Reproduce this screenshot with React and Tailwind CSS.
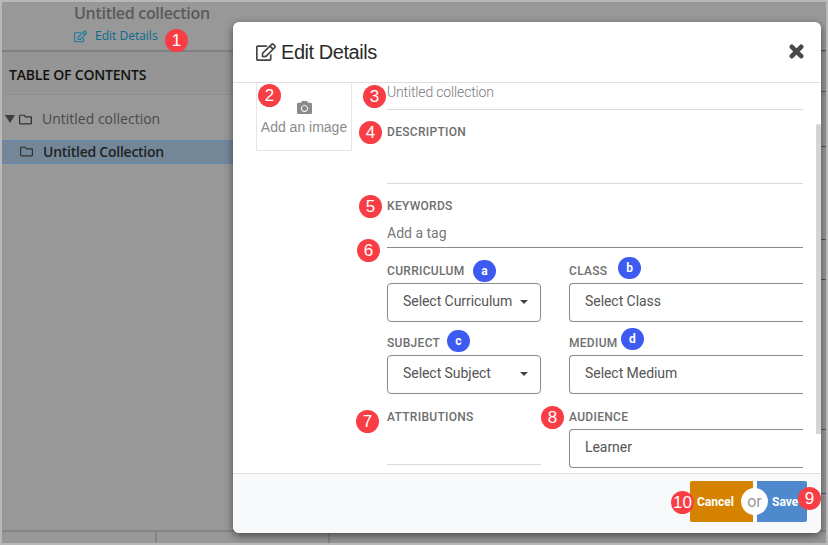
import React from "react";
import { FaRegEdit, FaCamera, FaRegFolder } from "react-icons/fa";

const Badge = ({ x, y, c = "red", children }) => (
  <span
    className={`absolute flex items-center justify-center rounded-full text-white ${c === "red" ? "w-[23px] h-[23px] bg-[#f83d44] text-[17px] [font-family:'Liberation_Sans',sans-serif]" : "w-[23px] h-[22px] bg-[#3d5af1] text-[12px] font-bold [font-family:Roboto,sans-serif]"}`}
    style={{ left: x, top: y }}
  >
    {children}
  </span>
);

const Label = ({ children }) => (
  <div className="text-[12px] leading-[14px] font-medium tracking-[0.3px] text-[#6e6e6e] [font-family:Roboto,sans-serif]">{children}</div>
);

const Select = ({ children, caret, wide }) => (
  <div
    className={`h-[39px] pb-[2px] flex items-center text-[14px] text-[#555] [font-family:Roboto,sans-serif] ${wide ? "w-[234px] border-y border-l border-[#8a8a8a] rounded-l-[4px] pl-[15px]" : "w-[154px] border border-[#8a8a8a] rounded-[4px] pl-[15px] pr-[12px] justify-between"}`}
  >
    <span className="tracking-[-0.05px]">{children}</span>
    {caret && <span className="shrink-0 w-0 h-0 border-x-[4px] border-x-transparent border-t-[4px] border-t-[#444]" />}
  </div>
);

const Field = ({ label, children, className = "" }) => (
  <div className={className}>
    <Label>{label}</Label>
    <div className="mt-[5px]">{children}</div>
  </div>
);

const ticks = [48, 89, 144, 237, 277, 427, 491];

export default function App() {
  return (
    <div className="relative w-[828px] h-[545px] overflow-hidden bg-[#989898] border-2 border-[#b8b8b8] [font-family:'Open_Sans',sans-serif]">
      <div className="flex flex-col h-full">
        <div className="h-[50px] border-b-2 border-[#808080] pl-[72px]">
          <div className="text-[16px] leading-[22px] font-semibold tracking-[-0.3px] text-[#5a5a5a]">Untitled collection</div>
          <div className="flex items-center gap-[8px] mt-[3px] text-[12px] leading-[18px] text-[#0b6b8f]">
            <FaRegEdit className="text-[13px] text-[#1f7d9c]" />
            <span>Edit Details</span>
          </div>
        </div>
        <div className="h-[43px] flex items-center pl-[7px] pt-[2px] bg-[#959595] border-b border-[#8e8e8e] text-[14px] font-semibold text-[#111] tracking-[-0.2px]">
          TABLE OF CONTENTS
        </div>
        <div className="h-[45px] flex items-end pb-[11px] pl-[3px] text-[14px] leading-[20px] text-[#4a4a4a]">
          <span className="mb-[6px] w-0 h-0 border-x-[5px] border-x-transparent border-t-[8px] border-t-[#3d3d3d]" />
          <FaRegFolder className="ml-[4px] mr-[10px] mb-[3px] text-[13px] text-[#333]" />
          Untitled collection
        </div>
        <div className="h-[24px] w-[328px] pb-[2px] flex items-center pl-[18px] bg-[#738799] border-y border-[#6488ad] text-[14px] font-semibold tracking-[-0.25px] text-[#222]">
          <FaRegFolder className="mr-[10px] text-[13px] text-[#333]" />
          Untitled Collection
        </div>
        <div className="flex-1" />
        <div className="h-[13px] border-t-2 border-[#858585] flex">
          <div className="w-[155px] border-r-2 border-[#858585]" />
          <div className="w-[173px] border-r-2 border-[#858585]" />
        </div>
      </div>

      {ticks.map((t) => (
        <span key={t} className="absolute left-[819px] w-[5px] h-[1px] bg-[#555]" style={{ top: t }} />
      ))}

      <div className="absolute left-[231px] top-[20px] w-[588px] h-[511px] bg-white rounded-[6px] shadow-[0_3px_9px_rgba(0,0,0,0.5)] flex flex-col overflow-hidden">
        <div className="h-[61px] shrink-0 border-b border-[#e0e0e0] flex items-center justify-between pl-[23px] pr-[17px] text-[#2b2b2b]">
          <div className="flex items-center gap-[5px] text-[20px] [font-family:'Liberation_Sans',sans-serif] tracking-[-0.45px]">
            <FaRegEdit className="text-[20px] text-[#444]" />
            <span>Edit Details</span>
          </div>
          <svg width="15" height="15" viewBox="0 0 15 15" className="mt-[-1px]">
            <path d="M2.8 2.8L12.2 12.2M12.2 2.8L2.8 12.2" stroke="#4a4a4a" strokeWidth="4.6" strokeLinecap="round" fill="none" />
          </svg>
        </div>

        <div className="relative flex-1 min-h-0 flex overflow-hidden pl-[23px]">
          <div className="w-[96px] h-[68px] shrink-0 border border-t-0 border-[#e6e6e6] flex flex-col items-center pt-[17px] text-[#8b8b8b]">
            <FaCamera className="text-[15px]" />
            <div className="mt-[2px] text-[14px] leading-[20px] [font-family:'Liberation_Sans',sans-serif]">Add an image</div>
          </div>

          <div className="ml-[35px] w-[416px] [font-family:Roboto,sans-serif]">
            <div className="h-[27px] border-b border-[#d9d9d9] text-[14px] leading-[18px] tracking-[-0.15px] text-[#7a7a7a] font-light">Untitled collection</div>
            <div className="h-[74px] border-b border-[#d9d9d9] pt-[15px]"><Label>DESCRIPTION</Label></div>
            <div className="pt-[15px]"><Label>KEYWORDS</Label></div>
            <div className="h-[35px] border-b border-[#8a8a8a] flex items-end pb-[4px] text-[14px] leading-[20px] text-[#777]">Add a tag</div>
            <div className="grid grid-cols-[154px_234px] gap-x-[28px] pt-[16px]">
              <Field label="CURRICULUM"><Select caret>Select Curriculum</Select></Field>
              <Field label="CLASS"><Select wide>Select Class</Select></Field>
              <Field label="SUBJECT" className="mt-[14px]"><Select caret>Select Subject</Select></Field>
              <Field label="MEDIUM" className="mt-[14px]"><Select wide>Select Medium</Select></Field>
              <div className="mt-[16px]">
                <Label>ATTRIBUTIONS</Label>
                <div className="h-[41px] border-b border-[#d9d9d9]" />
              </div>
              <Field label="AUDIENCE" className="mt-[16px]"><Select wide>Learner</Select></Field>
            </div>
          </div>

          <div className="absolute right-0 top-[41px] w-[5px] h-[310px] bg-[#d4d4d4] rounded-t-[2px]" />
        </div>

        <div className="h-[60px] shrink-0 bg-[#f8f9fb] border-t border-[#e0e0e0] flex justify-end pt-[7px] pr-[14px]">
          <div className="relative flex gap-[4px] h-[41px] text-[12px] font-bold text-white [font-family:Roboto,sans-serif]">
            <div className="w-[63px] bg-[#d48200] rounded-l-[2px] flex items-center pl-[7px]">Cancel</div>
            <div className="w-[50px] bg-[#4d89cc] rounded-r-[2px] flex items-center pl-[15px]">Save</div>
            <div className="absolute left-[51px] top-[7px] w-[27px] h-[27px] rounded-full bg-white flex items-center justify-center text-[16px] font-normal text-[#999]">or</div>
          </div>
        </div>
      </div>

      <Badge x={163} y={27}>1</Badge>
      <Badge x={256} y={82}>2</Badge>
      <Badge x={361} y={83}>3</Badge>
      <Badge x={357} y={119}>4</Badge>
      <Badge x={357} y={193}>5</Badge>
      <Badge x={355} y={237}>6</Badge>
      <Badge x={471} y={258} c="blue">a</Badge>
      <Badge x={616} y={255} c="blue">b</Badge>
      <Badge x={445} y={328} c="blue">c</Badge>
      <Badge x={619} y={326} c="blue">d</Badge>
      <Badge x={354} y={408}>7</Badge>
      <Badge x={539} y={404}>8</Badge>
      <Badge x={796} y={485}>9</Badge>
      <Badge x={669} y={489}>10</Badge>
    </div>
  );
}
